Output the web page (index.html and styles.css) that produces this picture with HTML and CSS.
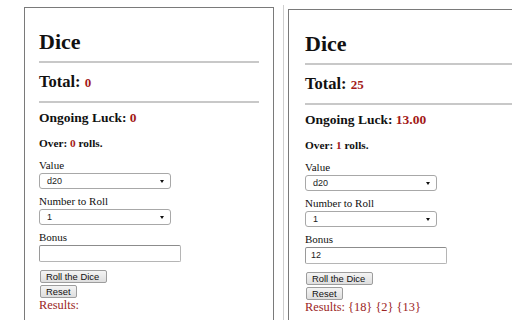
FILE: index.html
```html
<!DOCTYPE html>
<html>
<head>
<meta charset="utf-8">
<link rel="stylesheet" href="styles.css">
</head>
<body>
<div class="page">
  <div class="panel panel-left">
    <h1 class="title">Dice</h1>
    <div class="rule"></div>
    <h2 class="total">Total: <span class="num num-total">0</span></h2>
    <div class="rule"></div>
    <h3 class="luck">Ongoing Luck: <span class="num">0</span></h3>
    <p class="over">Over: <span class="num">0</span> rolls.</p>
    <div class="label label-first">Value</div>
    <div class="select"><span>d20</span><span class="arrow"></span></div>
    <div class="label">Number to Roll</div>
    <div class="select"><span>1</span><span class="arrow"></span></div>
    <div class="label">Bonus</div>
    <div class="input"></div>
    <div class="btn btn-roll">Roll the Dice</div>
    <div class="btn btn-reset">Reset</div>
    <div class="results">Results:</div>
  </div>
  <div class="divider"></div>
  <div class="panel panel-right">
    <h1 class="title">Dice</h1>
    <div class="rule"></div>
    <h2 class="total">Total: <span class="num num-total">25</span></h2>
    <div class="rule"></div>
    <h3 class="luck">Ongoing Luck: <span class="num">13.00</span></h3>
    <p class="over">Over: <span class="num">1</span> rolls.</p>
    <div class="label label-first">Value</div>
    <div class="select"><span>d20</span><span class="arrow"></span></div>
    <div class="label">Number to Roll</div>
    <div class="select"><span>1</span><span class="arrow"></span></div>
    <div class="label">Bonus</div>
    <div class="input">12</div>
    <div class="btn btn-roll">Roll the Dice</div>
    <div class="btn btn-reset">Reset</div>
    <div class="results">Results: {18} {2} {13}</div>
  </div>
</div>
</body>
</html>
```

FILE: styles.css
```css
html, body {
  margin: 0;
  padding: 0;
  background: #ffffff;
}

.page {
  display: flex;
  align-items: flex-start;
  width: 512px;
  height: 320px;
  overflow: hidden;
  font-family: "Liberation Serif", "Times New Roman", serif;
  color: #111;
}

.panel {
  flex: 0 0 auto;
  box-sizing: border-box;
  width: 250px;
  height: 420px;
  border: 1px solid #7a7a7a;
  padding: 0 14px 0 14px;
}

.panel-left {
  margin: 7px 0 0 24px;
}

.panel-right {
  margin: 9px 0 0 4px;
  padding-left: 16px;
}

.divider {
  flex: 0 0 auto;
  width: 1px;
  height: 320px;
  margin: 5px 0 0 9px;
  background: #cfcfcf;
}

.title {
  margin: 22px 0 0 0;
  font-size: 22px;
  line-height: 24px;
  font-weight: bold;
}

.rule {
  height: 2px;
  background: #c8c8c8;
  margin-top: 7px;
}

.total {
  margin: 9px 0 8px 0;
  font-size: 16.5px;
  line-height: 20px;
  font-weight: bold;
}

.luck {
  margin: 7px 0 0 0;
  font-size: 13.5px;
  line-height: 16px;
  font-weight: bold;
}

.over {
  margin: 10px 0 0 0;
  font-size: 11.3px;
  line-height: 14px;
  font-weight: bold;
}

.num {
  color: #a31919;
}

.num-total {
  font-size: 13px;
}

.label {
  margin-top: 5px;
  font-size: 11px;
  line-height: 14px;
}

.label-first {
  margin-top: 8px;
}

.select {
  box-sizing: border-box;
  width: 132px;
  height: 16px;
  margin-top: 1px;
  padding: 0 6px 0 7px;
  display: flex;
  align-items: center;
  justify-content: space-between;
  border: 1px solid #a8a8a8;
  border-radius: 3px;
  background: #fff;
  font-family: "Liberation Sans", Arial, sans-serif;
  font-size: 9px;
  color: #222;
}

.arrow {
  width: 0;
  height: 0;
  border-left: 2.5px solid transparent;
  border-right: 2.5px solid transparent;
  border-top: 3.5px solid #111;
}

.input {
  box-sizing: border-box;
  width: 142px;
  height: 17px;
  margin-top: 1px;
  padding: 0 5px;
  border: 1px solid #b5b5b5;
  border-top-color: #8c8c8c;
  border-left-color: #9a9a9a;
  border-radius: 2px;
  background: #fff;
  font-family: "Liberation Sans", Arial, sans-serif;
  font-size: 9px;
  line-height: 15px;
  color: #222;
}

.btn {
  box-sizing: border-box;
  width: fit-content;
  height: 13px;
  margin-left: 1px;
  padding: 0 5px;
  border: 1px solid #9d9d9d;
  border-radius: 2px;
  background: linear-gradient(#f4f4f4, #dedede);
  font-family: "Liberation Sans", Arial, sans-serif;
  font-size: 9.4px;
  line-height: 11px;
  color: #111;
}

.btn-roll {
  margin-top: 8px;
  width: 67px;
}

.btn-reset {
  margin-top: 2px;
  width: 37px;
}

.results {
  margin-top: 0;
  font-size: 12.4px;
  line-height: 14px;
  color: #9b2525;
}
```
